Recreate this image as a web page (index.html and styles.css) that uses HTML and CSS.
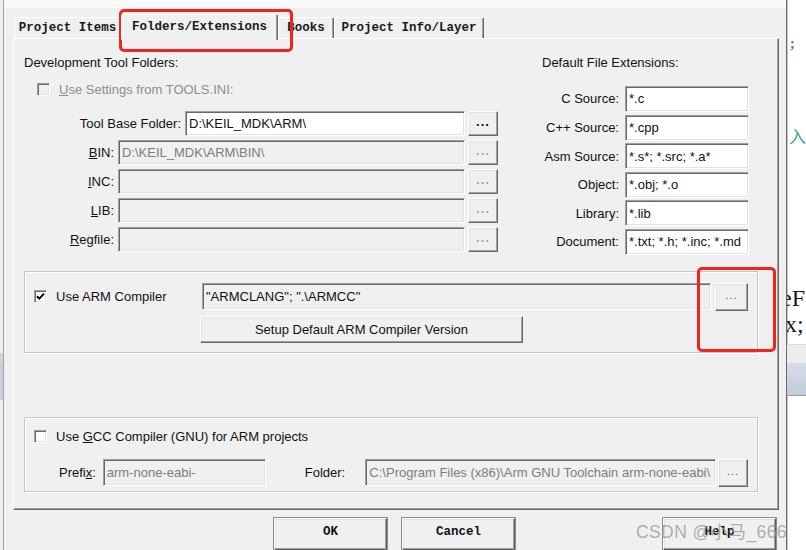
FILE: index.html
```html
<!DOCTYPE html>
<html lang="zh-cn">
<head>
    <meta charset="utf-8" />
    <title>Options for Target - Folders/Extensions</title>
    <link rel="stylesheet" href="styles.css">
</head>
<body>
<div class="screen">
    <div class="edge">
        <div class="edge-gray"></div>
        <div class="edge-blue"></div>
    </div>

    <div class="dialog">
        <div class="topband"></div>
        <div class="tabs">
            <div class="tab tab-items">Project Items</div>
            <div class="tab tab-active">Folders/Extensions</div>
            <div class="tab tab-books">Books</div>
            <div class="tab tab-info">Project Info/Layer</div>
        </div>

        <div class="panel">
            <div class="top">
                <div class="folders">
                    <div class="heading">Development Tool Folders:</div>
                    <div class="check-row disabled">
                        <span class="box box-off"></span>
                        <span><u>U</u>se Settings from TOOLS.INI:</span>
                    </div>
                    <div class="rows">
                        <div class="row">
                            <label>Tool Base Folder:</label>
                            <div class="field base">D:\KEIL_MDK\ARM\</div>
                            <div class="btn dots">...</div>
                        </div>
                        <div class="row">
                            <label><u>B</u>IN:</label>
                            <div class="field wide off">D:\KEIL_MDK\ARM\BIN\</div>
                            <div class="btn dots dim">...</div>
                        </div>
                        <div class="row">
                            <label><u>I</u>NC:</label>
                            <div class="field wide off"></div>
                            <div class="btn dots dim">...</div>
                        </div>
                        <div class="row">
                            <label><u>L</u>IB:</label>
                            <div class="field wide off"></div>
                            <div class="btn dots dim">...</div>
                        </div>
                        <div class="row">
                            <label><u>R</u>egfile:</label>
                            <div class="field wide off"></div>
                            <div class="btn dots dim">...</div>
                        </div>
                    </div>
                </div>

                <div class="exts">
                    <div class="heading">Default File Extensions:</div>
                    <div class="rows ext-rows">
                        <div class="row ext"><label>C Source:</label><div class="field">*.c</div></div>
                        <div class="row ext"><label>C++ Source:</label><div class="field">*.cpp</div></div>
                        <div class="row ext"><label>Asm Source:</label><div class="field">*.s*; *.src; *.a*</div></div>
                        <div class="row ext"><label>Object:</label><div class="field">*.obj; *.o</div></div>
                        <div class="row ext"><label>Library:</label><div class="field">*.lib</div></div>
                        <div class="row ext"><label>Document:</label><div class="field">*.txt; *.h; *.inc; *.md</div></div>
                    </div>
                </div>
            </div>

            <div class="group armcc">
                <div class="line1">
                    <div class="cb-label">
                        <span class="box">
                            <svg width="11" height="11" viewBox="0 0 11 11"><path d="M2 5.2 L4.3 7.6 L9 2.6" fill="none" stroke="#000" stroke-width="2"/></svg>
                        </span>
                        <span>Use ARM Compiler</span>
                    </div>
                    <div class="field compiler">"ARMCLANG"; ".\ARMCC"</div>
                    <div class="btn dots small">...</div>
                </div>
                <div class="line2">
                    <div class="btn setup">Setup Default ARM Compiler Version</div>
                </div>
            </div>

            <div class="group gcc">
                <div class="line1">
                    <div class="cb-label">
                        <span class="box"></span>
                        <span>Use <u>G</u>CC Compiler (GNU) for ARM projects</span>
                    </div>
                </div>
                <div class="line2">
                    <label class="prefix-label">Prefi<u>x</u>:</label>
                    <div class="field off prefix">arm-none-eabi-</div>
                    <label class="folder-label">Folder:</label>
                    <div class="field off folder">C:\Program Files (x86)\Arm GNU Toolchain arm-none-eabi\</div>
                    <div class="btn dots small">...</div>
                </div>
            </div>
        </div>

        <div class="btnrow">
            <div class="btn pbtn">OK</div>
            <div class="btn pbtn cancel">Cancel</div>
            <div class="btn pbtn help">Help</div>
        </div>
    </div>

    <div class="behind">
        <div class="bh-semi">;</div>
        <div class="bh-ru">入</div>
        <div class="bh-ef">eF</div>
        <div class="bh-x">x;</div>
        <div class="bh-gray"></div>
        <div class="bh-blue"></div>
    </div>

    <!-- red annotation boxes drawn over the screenshot -->
    <div class="mark mark-tab"></div>
    <div class="mark mark-btn"></div>
    <div class="watermark">CSDN @小马_666</div>
</div>
</body>
</html>
```

FILE: styles.css
```css
* {
    margin: 0;
    padding: 0;
    box-sizing: border-box;
}

body {
    width: 806px;
    height: 550px;
    overflow: hidden;
    background: #fff;
    font-family: "Liberation Sans", Arial, sans-serif;
    font-size: 13px;
    color: #111;
}

u {
    text-decoration: underline;
    text-underline-offset: 1px;
}

.screen {
    display: flex;
    height: 550px;
    position: relative;
}

/* window behind, left edge */
.edge {
    width: 4px;
    background: #f0f0f0;
    border-right: 1px solid #a3a3a3;
    display: flex;
    flex-direction: column;
    padding-top: 353px;
}

.edge-gray {
    height: 12px;
    background: #d2d2d2;
}

.edge-blue {
    height: 35px;
    background: #c6d0dc;
}

/* dialog */
.dialog {
    width: 783px;
    background: #f0f0f0;
    border-right: 1px solid #6a6a6a;
    box-shadow: 1px 0 0 #c4c4c4;
    display: flex;
    flex-direction: column;
}

.topband {
    height: 8px;
    background: #fafafa;
}

.tabs {
    height: 30px;
    margin-left: 10px;
    display: flex;
    align-items: flex-end;
    font-family: "Liberation Mono", "Courier New", monospace;
    font-weight: bold;
    font-size: 12.5px;
    color: #1a1a1a;
}

.tab {
    height: 21px;
    line-height: 20px;
    text-align: center;
    border-top: 1px solid #fff;
    border-left: 1px solid #fff;
    border-right: 1px solid #696969;
    box-shadow: inset -1px 0 0 #a0a0a0;
    border-radius: 2px 2px 0 0;
    white-space: nowrap;
}

.tab-items {
    width: 107px;
}

.tab-active {
    width: 157px;
    height: 26px;
    line-height: 24px;
    margin-bottom: -2px;
    position: relative;
    z-index: 1;
    background: #f0f0f0;
}

.tab-books {
    width: 56px;
}

.tab-info {
    width: 150px;
}

.panel {
    margin-left: 9px;
    width: 766px;
    height: 473px;
    border: 1px solid;
    border-color: #fff #696969 #696969 #fff;
    box-shadow: inset -1px -1px 0 #a0a0a0;
    padding: 15px 0 0 10px;
}

.top {
    display: flex;
}

.heading {
    line-height: 16px;
    padding-top: 1px;
}

.folders {
    width: 474px;
}

.check-row {
    display: flex;
    align-items: center;
    gap: 9px;
    height: 13px;
    margin: 12px 0 0 13px;
}

.disabled {
    color: #8e8e8e;
}

.box {
    width: 13px;
    height: 13px;
    flex: none;
    background: #fff;
    border: 1px solid;
    border-color: #a0a0a0 #fff #fff #a0a0a0;
    box-shadow: inset 1px 1px 0 #696969, inset -1px -1px 0 #e3e3e3;
    display: flex;
    align-items: center;
    justify-content: center;
}

.box-off {
    background: #f0f0f0;
}

.rows {
    margin-top: 15px;
    display: flex;
    flex-direction: column;
    gap: 4px;
}

.row {
    display: flex;
    justify-content: flex-end;
    align-items: center;
    height: 25px;
}

.row label {
    margin-right: 4px;
}

.field {
    height: 25px;
    background: #fff;
    border: 1px solid;
    border-color: #a0a0a0 #fff #fff #a0a0a0;
    box-shadow: inset 1px 1px 0 #696969, inset -1px -1px 0 #e3e3e3;
    padding-left: 3px;
    display: flex;
    align-items: center;
    white-space: nowrap;
    overflow: hidden;
}

.field.off {
    background: #f0f0f0;
    color: #7d7d7d;
}

.base {
    width: 280px;
}

.wide {
    width: 347px;
}

.btn {
    background: #f0f0f0;
    border: 1px solid;
    border-color: #fff #696969 #696969 #fff;
    box-shadow: inset -1px -1px 0 #a0a0a0, inset 1px 1px 0 #e3e3e3;
    display: flex;
    align-items: center;
    justify-content: center;
    white-space: nowrap;
}

.dots {
    width: 30px;
    height: 25px;
    margin-left: 3px;
    font-weight: bold;
    letter-spacing: 1px;
    padding-bottom: 4px;
}

.dots.dim {
    color: #a8a8a8;
}

.dots.small {
    font-weight: normal;
    font-size: 11px;
    color: #555;
}

.exts {
    margin-left: 44px;
    width: 207px;
}

.ext-rows {
    gap: 2.6px;
}

.row.ext {
    height: 26px;
}

.row.ext label {
    margin-right: 6px;
}

.row.ext .field {
    width: 124px;
    height: 26px;
}

/* group boxes */
.group {
    width: 734px;
    border: 1px solid #c6c6c6;
    box-shadow: inset 1px 1px 0 #fff, 1px 1px 0 #fff;
}

.armcc {
    margin-top: 16px;
    padding: 11px 9px 9px 9px;
}

.line1 {
    display: flex;
    align-items: center;
}

.armcc .line1 {
    height: 28px;
}

.cb-label {
    width: 168px;
    display: flex;
    align-items: center;
    gap: 9px;
    white-space: nowrap;
}

.field.compiler {
    width: 509px;
    height: 27px;
    background: #f0f0f0;
    border-color: #a0a0a0 #fff #fff #a0a0a0;
}

.armcc .dots {
    width: 33px;
    height: 28px;
    margin-left: 4px;
}

.armcc .line2 {
    margin: 5px 0 0 166px;
}

.setup {
    width: 323px;
    height: 27px;
}

.gcc {
    margin-top: 64px;
    padding: 12px 9px 4px 9px;
}

.gcc .line1 {
    height: 14px;
}

.gcc .line2 {
    margin-top: 15px;
    height: 28px;
    display: flex;
    align-items: center;
}

.prefix-label {
    margin-left: 25px;
    width: 44px;
}

.field.prefix {
    width: 164px;
    height: 27px;
}

.folder-label {
    margin-left: 39px;
    width: 61px;
}

.field.folder {
    width: 353px;
    height: 27px;
}

.gcc .dots {
    width: 30px;
    height: 28px;
    margin-left: 2px;
}

/* bottom buttons */
.btnrow {
    display: flex;
    margin: 8px 0 0 270px;
}

.pbtn {
    width: 113px;
    height: 32px;
    align-items: flex-start;
    line-height: 26px;
    font-family: "Liberation Mono", "Courier New", monospace;
    font-weight: bold;
    font-size: 12.5px;
    border-color: #fff #5e5e5e #5e5e5e #fff;
    outline: 1px solid #8c8c8c;
}

.cancel {
    margin-left: 15px;
}

.help {
    margin-left: 148px;
}

/* window behind, right side */
.behind {
    width: 19px;
    overflow: hidden;
    display: flex;
    flex-direction: column;
    font-family: "Liberation Serif", serif;
}

.bh-semi {
    margin: 36px 0 0 3px;
    line-height: 16px;
    font-size: 14px;
    font-weight: bold;
    color: #3c8c3c;
}

.bh-ru {
    margin: 74px 0 0 2px;
    line-height: 20px;
    font-size: 17px;
    font-family: "Noto Sans CJK SC", sans-serif;
    color: #3d9a9a;
}

.bh-ef {
    margin: 140px 0 0 -6px;
    line-height: 24px;
    font-size: 24px;
    color: #1a1a2a;
    white-space: nowrap;
}

.bh-x {
    margin: 2px 0 0 -2px;
    line-height: 24px;
    font-size: 24px;
    color: #1a1a2a;
    white-space: nowrap;
}

.bh-gray {
    margin-top: 8px;
    height: 19px;
    background: #ececec;
    border-top: 1px solid #dcdcdc;
}

.bh-blue {
    height: 33px;
    background: linear-gradient(#d4dce6, #c2cdda);
    border-bottom: 1px solid #9a9a9a;
}

/* annotations */
.mark {
    position: absolute;
    border: 3px solid #f2231b;
    border-radius: 5px;
}

.mark-tab {
    left: 119px;
    top: 9px;
    width: 174px;
    height: 43px;
}

.mark-btn {
    left: 697px;
    top: 267px;
    width: 79px;
    height: 85px;
}

.watermark {
    position: absolute;
    left: 636px;
    top: 521px;
    font-family: "Liberation Sans", "Noto Sans CJK SC", sans-serif;
    font-size: 17.5px;
    line-height: 22px;
    letter-spacing: 0.4px;
    color: rgba(160, 160, 160, 0.85);
    white-space: nowrap;
}
```
